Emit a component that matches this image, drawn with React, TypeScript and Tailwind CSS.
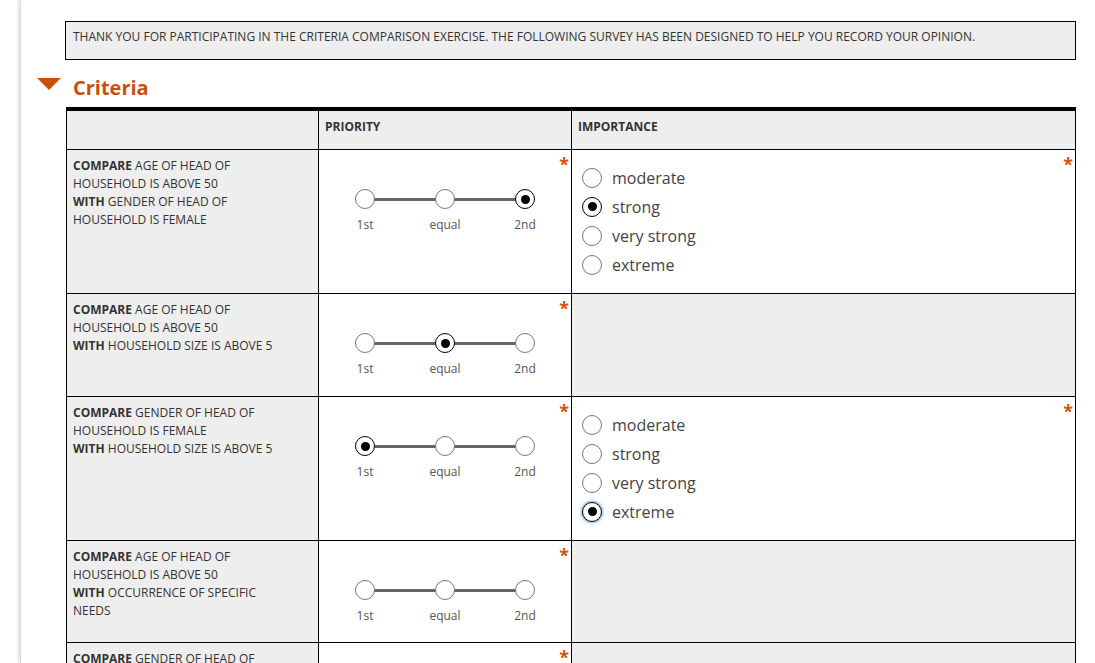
import { useState } from 'react'

type Pair = { a: string; b: string; priority: number | null; importance: number | null }

const IMPORTANCE = ['moderate', 'strong', 'very strong', 'extreme']
const PRIORITY = ['1st', 'equal', '2nd']

const rows: Pair[] = [
  { a: 'AGE OF HEAD OF HOUSEHOLD IS ABOVE 50', b: 'GENDER OF HEAD OF HOUSEHOLD IS FEMALE', priority: 2, importance: 1 },
  { a: 'AGE OF HEAD OF HOUSEHOLD IS ABOVE 50', b: 'HOUSEHOLD SIZE IS ABOVE 5', priority: 1, importance: null },
  { a: 'GENDER OF HEAD OF HOUSEHOLD IS FEMALE', b: 'HOUSEHOLD SIZE IS ABOVE 5', priority: 0, importance: 3 },
  { a: 'AGE OF HEAD OF HOUSEHOLD IS ABOVE 50', b: 'OCCURRENCE OF SPECIFIC NEEDS', priority: null, importance: null },
  { a: 'GENDER OF HEAD OF HOUSEHOLD IS FEMALE', b: 'OCCURRENCE OF SPECIFIC NEEDS', priority: null, importance: null },
]

function Dot({ checked, focus }: { checked: boolean; focus?: boolean }) {
  return (
    <span
      className={`relative z-10 flex h-[20px] w-[20px] shrink-0 items-center justify-center rounded-full bg-white ${
        checked ? 'border-[1.5px] border-black' : 'border border-[#767676]'
      } ${focus ? 'shadow-[0_0_3px_1px_rgba(80,140,230,0.7)]' : ''}`}
    >
      {checked && <span className="h-[9px] w-[9px] rounded-full bg-black" />}
    </span>
  )
}

function Required() {
  return (
    <span className="absolute right-[2px] top-[5px] text-[18px] font-bold leading-none text-[#d35400]">*</span>
  )
}

function PrioritySlider({ value, onChange }: { value: number | null; onChange: (v: number) => void }) {
  return (
    <div className="relative mx-auto mt-[39px] w-[200px]">
      <div className="absolute left-[20px] right-[20px] top-[9px] h-[3px] bg-[#666]" />
      <div className="flex justify-between">
        {PRIORITY.map((p, i) => (
          <button key={p} onClick={() => onChange(i)} className="flex w-10 flex-col items-center">
            <Dot checked={value === i} />
            <span className="mt-[8px] text-[12px] leading-[16px] text-[#555]">{p}</span>
          </button>
        ))}
      </div>
    </div>
  )
}

function Importance({ value, onChange, focus }: { value: number | null; onChange: (v: number) => void; focus?: boolean }) {
  return (
    <div className="pl-[10px] pt-[13px]">
      {IMPORTANCE.map((m, i) => (
        <button key={m} onClick={() => onChange(i)} className="flex h-[29px] items-center gap-[10px]">
          <Dot checked={value === i} focus={focus && value === i} />
          <span className="text-[16px] leading-none text-[#444]">{m}</span>
        </button>
      ))}
    </div>
  )
}

export default function App() {
  const [data, setData] = useState(rows)

  function update(idx: number, patch: Partial<Pair>) {
    setData(d => d.map((r, i) => (i === idx ? { ...r, ...patch } : r)))
  }

  return (
    <div className="flex h-[663px] overflow-hidden bg-white font-['Open_Sans',sans-serif] text-[#333]">
      <div className="w-[20px] shrink-0" />
      <div className="flex-1 border-l border-[#d8d8d8] shadow-[-2px_0_3px_rgba(0,0,0,0.12)]">
        <div className="pl-[44px] pr-[19px] pt-[21px]">
          <div className="h-[39px] border border-black bg-[#eee] px-[7px] pt-[6px] text-[12px] leading-[18px] text-[#333]">
            THANK YOU FOR PARTICIPATING IN THE CRITERIA COMPARISON EXERCISE. THE FOLLOWING SURVEY HAS BEEN DESIGNED TO HELP YOU RECORD YOUR OPINION.
          </div>

          <div className="ml-[-28px] mt-[14px] flex h-[28px] items-center gap-[12px]">
            <span className="mt-[-8px] h-0 w-0 border-x-[12px] border-t-[12px] border-x-transparent border-t-[#c9500c]" />
            <h2 className="text-[20px] font-bold leading-none text-[#c9500c]">Criteria</h2>
          </div>

          <div className="ml-px mt-[5px] border-l border-t-4 border-black">
            <div className="grid grid-cols-[252px_253px_1fr]">
              <div className="h-[39px] border-b border-r border-black bg-[#eee]" />
              <div className="h-[39px] border-b border-r border-black bg-[#eee] px-[6px] pt-[8px] text-[12px] font-bold leading-[16px] text-[#333]">
                PRIORITY
              </div>
              <div className="h-[39px] border-b border-r border-black bg-[#eee] px-[6px] pt-[8px] text-[12px] font-bold leading-[16px] text-[#333]">
                IMPORTANCE
              </div>

              {data.map((r, i) => {
                const showImp = r.priority !== null && r.priority !== 1
                const tall = i % 2 === 0 && i < 4
                return (
                  <div key={i} className="contents">
                    <div
                      className={`border-b border-r border-black bg-[#eee] pl-[6px] pr-[30px] pt-[7px] text-[12px] leading-[18px] text-[#333] ${
                        tall ? 'h-[144px]' : i === 1 ? 'h-[103px]' : 'h-[102px]'
                      }`}
                    >
                      <span className="font-bold">COMPARE</span> {r.a}
                      <br />
                      <span className="font-bold">WITH</span> {r.b}
                    </div>
                    <div className="relative border-b border-r border-black bg-white">
                      <Required />
                      <PrioritySlider value={r.priority} onChange={v => update(i, { priority: v })} />
                    </div>
                    {showImp ? (
                      <div className="relative border-b border-r border-black bg-white">
                        <Required />
                        <Importance value={r.importance} focus={i === 2} onChange={v => update(i, { importance: v })} />
                      </div>
                    ) : (
                      <div className="border-b border-r border-black bg-[#eee]" />
                    )}
                  </div>
                )
              })}
            </div>
          </div>
        </div>
      </div>
    </div>
  )
}
